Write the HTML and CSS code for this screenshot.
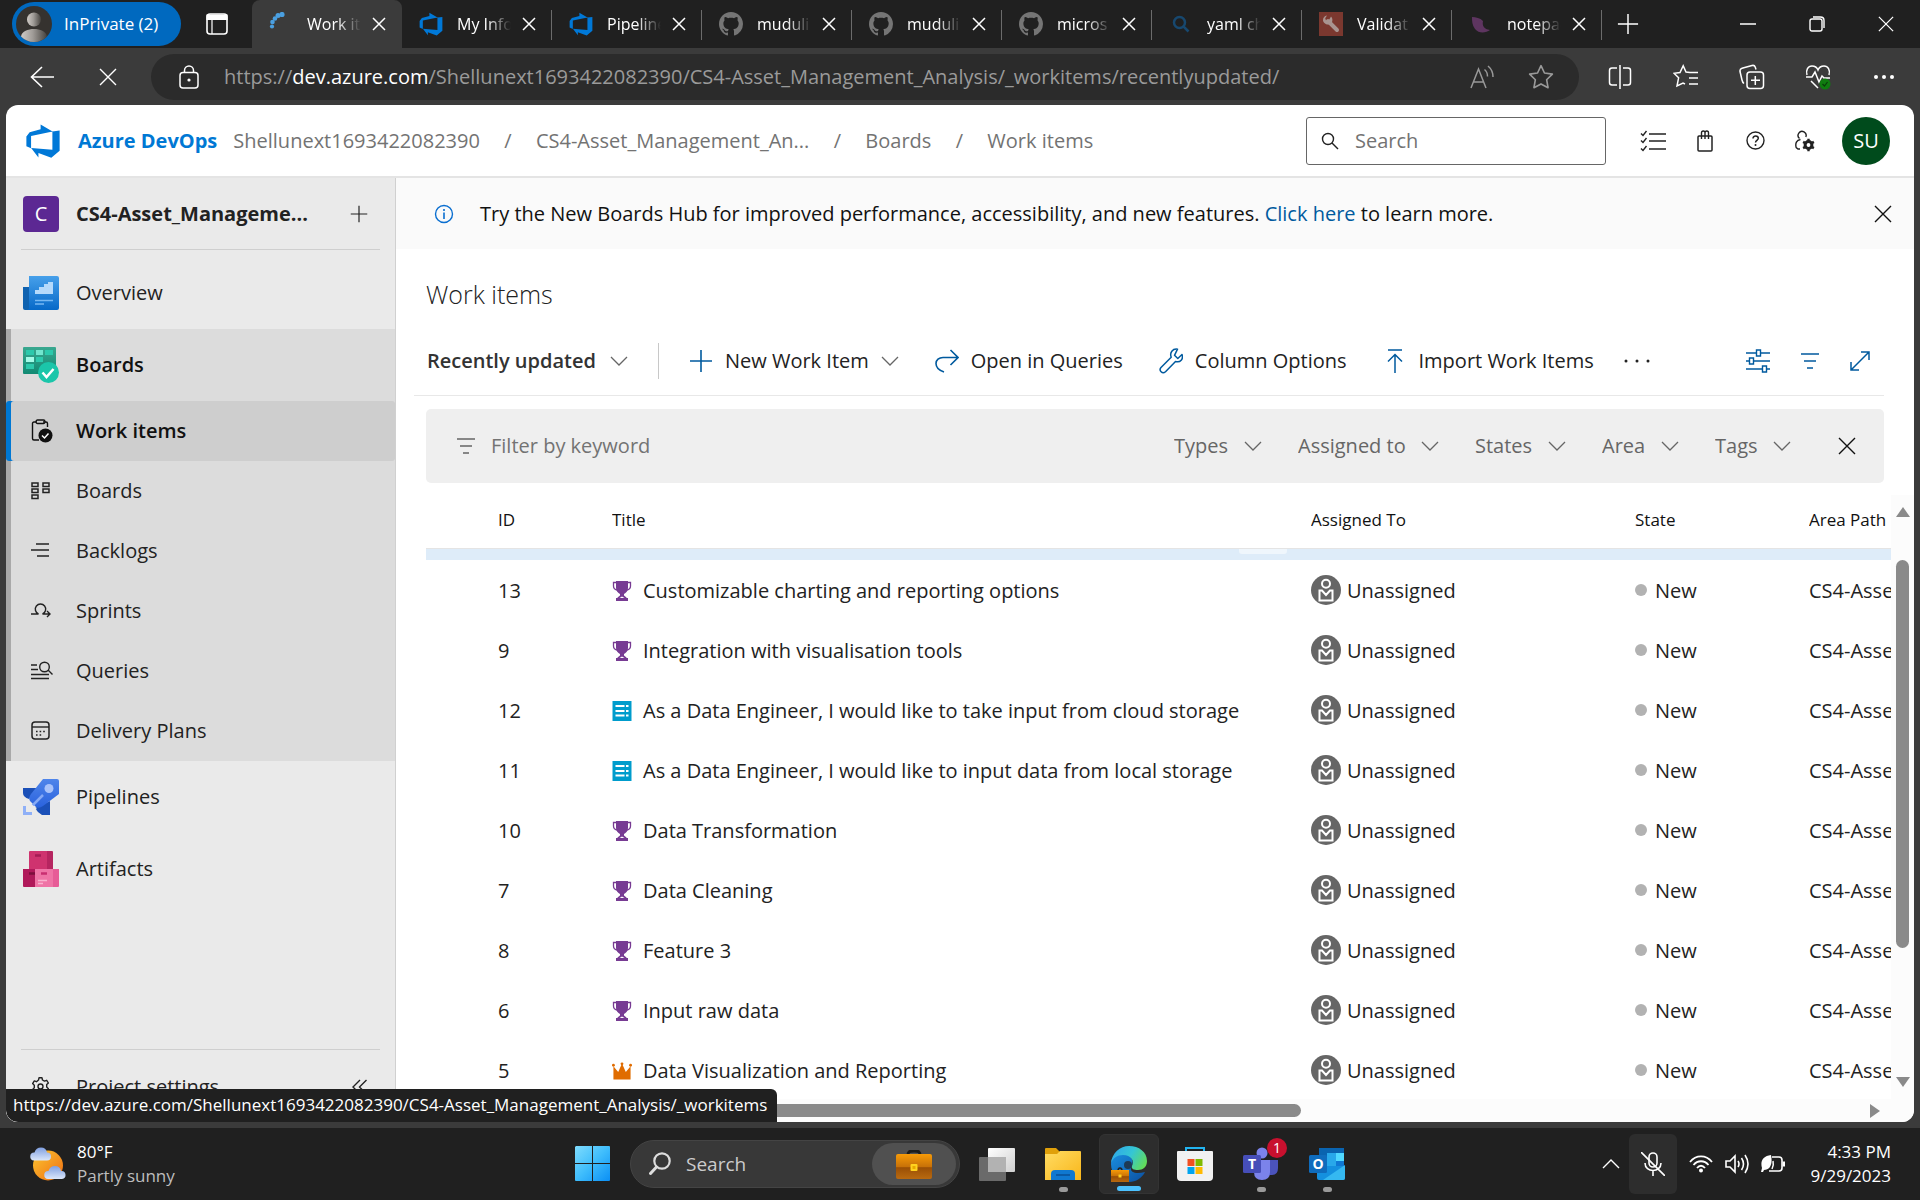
FILE: index.html
```html
<!DOCTYPE html>
<html lang="en">
<head>
<meta charset="utf-8">
<title>Work items - Boards</title>
<link rel="stylesheet" href="styles.css">
</head>
<body>
<svg class="sprite" aria-hidden="true">
  <defs>
    <linearGradient id="g-person" x1="0" x2="1"><stop offset="0" stop-color="#d0cbc6"/><stop offset=".45" stop-color="#a09c98"/><stop offset="1" stop-color="#45423e"/></linearGradient>
    <linearGradient id="g-over" x1="0" y1="0" x2="0" y2="1"><stop offset="0" stop-color="#47a0ea"/><stop offset="1" stop-color="#0669c8"/></linearGradient>
    <linearGradient id="g-board" x1="0" y1="0" x2="0" y2="1"><stop offset="0" stop-color="#3aa890"/><stop offset="1" stop-color="#118a73"/></linearGradient>
    <linearGradient id="g-rocket" x1="0" y1="0" x2="0" y2="1"><stop offset="0" stop-color="#4f85ea"/><stop offset="1" stop-color="#2a62dd"/></linearGradient>
    <linearGradient id="g-win" x1="0" y1="0" x2="1" y2="1"><stop offset="0" stop-color="#7fdcfd"/><stop offset=".5" stop-color="#3fbdfc"/><stop offset="1" stop-color="#0a8ff5"/></linearGradient>
    <linearGradient id="g-sun" x1="0" y1="0" x2="1" y2="1"><stop offset="0" stop-color="#fcc630"/><stop offset="1" stop-color="#ef6d12"/></linearGradient>
    <linearGradient id="g-cloud" x1="0" y1="0" x2="0" y2="1"><stop offset="0" stop-color="#7f9fe0"/><stop offset="1" stop-color="#dbe7fb"/></linearGradient>
    <linearGradient id="g-edge1" x1="0" y1=".3" x2="1" y2=".7"><stop offset="0" stop-color="#2fa8ea"/><stop offset=".5" stop-color="#35c6d4"/><stop offset="1" stop-color="#64dd55"/></linearGradient>
    <linearGradient id="g-edge2" x1="0" y1="0" x2="1" y2="1"><stop offset="0" stop-color="#1a8fe0"/><stop offset="1" stop-color="#0b4fa0"/></linearGradient>
    <linearGradient id="g-folder" x1="0" y1="0" x2="1" y2="1"><stop offset="0" stop-color="#ffdc63"/><stop offset="1" stop-color="#f9b61a"/></linearGradient>
    <linearGradient id="g-case" x1="0" y1="0" x2="0" y2="1"><stop offset="0" stop-color="#f79b08"/><stop offset=".5" stop-color="#c87208"/><stop offset=".55" stop-color="#9a4f05"/><stop offset="1" stop-color="#b96a10"/></linearGradient>
    <linearGradient id="g-view" x1="0" y1="0" x2="1" y2="1"><stop offset="0" stop-color="#ffffff"/><stop offset="1" stop-color="#cfcfcf"/></linearGradient>
  </defs>
  <symbol id="i-devops" viewBox="0 0 16 16"><path fill="#0078d7" d="M15 3.622v8.512L11.5 15l-5.425-1.975v1.958L3.004 10.97l8.951.7V4.005L15 3.622zm-2.984.428L6.994 1v2.001L2.382 4.356 1 6.13v4.029l1.978.873V5.869l9.038-1.818z"/></symbol>
  <symbol id="i-github" viewBox="0 0 16 16"><path fill="#757575" d="M8 0C3.58 0 0 3.58 0 8c0 3.54 2.29 6.53 5.47 7.59.4.07.55-.17.55-.38 0-.19-.01-.82-.01-1.49-2.01.37-2.53-.49-2.69-.94-.09-.23-.48-.94-.82-1.13-.28-.15-.68-.52-.01-.53.63-.01 1.08.58 1.23.82.72 1.21 1.87.87 2.33.66.07-.52.28-.87.51-1.07-1.78-.2-3.64-.89-3.64-3.95 0-.87.31-1.59.82-2.15-.08-.2-.36-1.02.08-2.12 0 0 .67-.21 2.2.82.64-.18 1.32-.27 2-.27s1.36.09 2 .27c1.53-1.04 2.2-.82 2.2-.82.44 1.1.16 1.92.08 2.12.51.56.82 1.27.82 2.15 0 3.07-1.87 3.75-3.65 3.95.29.25.54.73.54 1.48 0 1.07-.01 1.93-.01 2.2 0 .21.15.46.55.38A8.01 8.01 0 0 0 16 8c0-4.42-3.58-8-8-8z"/></symbol>
  <symbol id="i-x" viewBox="0 0 16 16"><path d="M2 2l12 12M14 2L2 14" fill="none" stroke="currentColor" stroke-width="1.5"/></symbol>
  <symbol id="i-xthin" viewBox="0 0 18 18"><path d="M1 1l16 16M17 1L1 17" fill="none" stroke="currentColor" stroke-width="1.4"/></symbol>
  <symbol id="i-plus" viewBox="0 0 24 24"><path d="M12 1v22M1 12h22" fill="none" stroke="currentColor" stroke-width="1.6"/></symbol>
  <symbol id="i-chev" viewBox="0 0 18 10"><path d="M1 1l8 8 8-8" fill="none" stroke="currentColor" stroke-width="1.3"/></symbol>
  <symbol id="i-search" viewBox="0 0 18 18"><circle cx="7" cy="7" r="5.5" fill="none" stroke="currentColor" stroke-width="1.4"/><path d="M11 11l6 6" stroke="currentColor" stroke-width="1.4"/></symbol>
  <symbol id="i-filter" viewBox="0 0 20 18"><path d="M1 2h18M4 9h12M7 16h6" stroke="currentColor" stroke-width="1.5"/></symbol>
  <symbol id="i-star" viewBox="0 0 24 24"><path d="M12 1.500l3.200 6.800 7.300 1-5.300 5.200 1.300 7.400L12 18.400l-6.500 3.500 1.300-7.400L1.500 9.300l7.300-1z" fill="none" stroke="currentColor" stroke-width="1.500" stroke-linejoin="round"/></symbol>
  <symbol id="i-trophy" viewBox="0 0 19 20"><path fill="#773b93" d="M3.500 0h12v7c0 3-2 5-4 6v1.500l2.500 2V17h1.500v3H3.500v-3H5v-.500l2.500-2V13c-2-1-4-3-4-6z"/><path d="M4 1.500H1V5c0 2.500 1.500 3.500 3.500 4M15 1.500h3V5c0 2.500-1.500 3.500-3.500 4" fill="none" stroke="#773b93" stroke-width="1.300"/><path d="M7 17l2.500-1.500L12 17z" fill="#fff"/></symbol>
  <symbol id="i-story" viewBox="0 0 19 20"><path fill="#009ccc" d="M0 0h19v20H0z"/><path d="M3 5h9M3 10h9M3 14.500h9M13.500 5H16M13.500 10H16M13.500 14.500H16" stroke="#fff" stroke-width="1.800"/></symbol>
  <symbol id="i-crown" viewBox="0 0 21 18"><path fill="#e06c00" d="M1.500 18V4l5 6 4-9 4 9 5-6v14z"/><circle cx="1.500" cy="3" r="1.500" fill="#e06c00"/><circle cx="10.500" cy="1.500" r="1.500" fill="#e06c00"/><circle cx="19.500" cy="3" r="1.500" fill="#e06c00"/></symbol>
  <symbol id="i-person" viewBox="0 0 30 30"><circle cx="15" cy="15" r="15" fill="#666"/><circle cx="15" cy="8.700" r="4" fill="none" stroke="#fff" stroke-width="2"/><path d="M8.500 25.500V15.500h2.500l4 4.500 4-4.500h2.500v10z" fill="none" stroke="#fff" stroke-width="2"/></symbol>
  <symbol id="i-case" viewBox="0 0 36 29"><path d="M12 5c0-3 1-4 6-4s6 1 6 4" fill="none" stroke="#1c1c1c" stroke-width="3"/><rect y="4" width="36" height="25" rx="2" fill="url(#g-case)"/><rect x="14.500" y="14" width="7" height="7" rx="1" fill="#ffd21f"/><rect x="16.500" y="16" width="3" height="3" fill="#e9a800"/></symbol>
</svg>

<header class="tabstrip">
  <button class="inprivate">
    <svg width="36" height="36" viewBox="0 0 36 36"><circle cx="18" cy="18" r="18" fill="#35322f"/><circle cx="18" cy="13.500" r="7" fill="url(#g-person)"/><path d="M5 30.500C6 25 12 23 18 23s12 2 13 7.500A18 18 0 0 1 18 36 18 18 0 0 1 5 30.500z" fill="url(#g-person)"/></svg>
    <span>InPrivate (2)</span>
  </button>
  <button class="tabmenu" aria-label="Tab actions"><svg width="22" height="22" viewBox="0 0 22 22"><rect x="1" y="1" width="20" height="20" rx="3" fill="none" stroke="#fff" stroke-width="1.600"/><path d="M1 2h20v4.500H1zM6 6v15" fill="#fff" stroke="#fff" stroke-width="1.200"/></svg></button>
  <nav class="tabs" aria-label="Open tabs">
    <div class="tab active"><svg class="fav" width="24" height="24" viewBox="0 0 24 24"><g fill="#4a9fe0"><circle cx="13" cy="2.500" r="2.600"/><circle cx="9" cy="3.500" r="2.500"/><circle cx="6" cy="6.500" r="2.300"/><circle cx="3.500" cy="10" r="2.300"/><circle cx="3" cy="14.500" r="2.100"/></g></svg><span class="tabname">Work items</span><button class="tabclose" aria-label="Close tab"><svg width="16" height="16"><use href="#i-x"/></svg></button></div>
    <div class="tab"><svg class="fav" width="26" height="26"><use href="#i-devops"/></svg><span class="tabname">My Information</span><button class="tabclose" aria-label="Close tab"><svg width="16" height="16"><use href="#i-x"/></svg></button></div>
    <div class="tab"><svg class="fav" width="26" height="26"><use href="#i-devops"/></svg><span class="tabname">Pipelines</span><button class="tabclose" aria-label="Close tab"><svg width="16" height="16"><use href="#i-x"/></svg></button></div>
    <div class="tab"><svg class="fav" width="24" height="24"><use href="#i-github"/></svg><span class="tabname">muduli</span><button class="tabclose" aria-label="Close tab"><svg width="16" height="16"><use href="#i-x"/></svg></button></div>
    <div class="tab"><svg class="fav" width="24" height="24"><use href="#i-github"/></svg><span class="tabname">muduli</span><button class="tabclose" aria-label="Close tab"><svg width="16" height="16"><use href="#i-x"/></svg></button></div>
    <div class="tab"><svg class="fav" width="24" height="24"><use href="#i-github"/></svg><span class="tabname">micros</span><button class="tabclose" aria-label="Close tab"><svg width="16" height="16"><use href="#i-x"/></svg></button></div>
    <div class="tab"><svg class="fav" width="24" height="24" viewBox="0 0 24 24"><circle cx="10.500" cy="10.500" r="5.500" fill="none" stroke="#17486f" stroke-width="2.500"/><path d="M14.500 14.500l5 5" stroke="#17486f" stroke-width="2.500"/></svg><span class="tabname">yaml ch</span><button class="tabclose" aria-label="Close tab"><svg width="16" height="16"><use href="#i-x"/></svg></button></div>
    <div class="tab"><svg class="fav" width="24" height="24" viewBox="0 0 24 24"><path fill="#7b382f" d="M0 0h24v24H0z"/><path d="M9 9l9 9" stroke="#a99490" stroke-width="4" stroke-linecap="round"/><path d="M4 8.500a5 5 0 0 0 8 3 5 5 0 0 0 0-7l-2 3.500-3 .500-.800-2.300L8 3.500a5 5 0 0 0-4 5z" fill="#a99490"/></svg><span class="tabname">Validat</span><button class="tabclose" aria-label="Close tab"><svg width="16" height="16"><use href="#i-x"/></svg></button></div>
    <div class="tab"><svg class="fav" width="24" height="24" viewBox="0 0 24 24"><path d="M3 5c4 0 8 1 11 4-1 5 1 8 7 9-4 3-11 4-15-1-3-4-3-8-3-12z" fill="#5e3560"/></svg><span class="tabname">notepad</span><button class="tabclose" aria-label="Close tab"><svg width="16" height="16"><use href="#i-x"/></svg></button></div>
  </nav>
  <button class="newtab" aria-label="New tab"><svg width="22" height="22"><use href="#i-plus"/></svg></button>
  <div class="winbtns">
    <button aria-label="Minimize"><svg width="16" height="16" viewBox="0 0 16 16"><path d="M0 8h16" stroke="#fff" stroke-width="1.500"/></svg></button>
    <button aria-label="Restore"><svg width="16" height="16" viewBox="0 0 16 16"><rect x="1" y="3" width="12" height="12" rx="2" fill="none" stroke="#fff" stroke-width="1.400"/><path d="M4 1h7.500Q15 1 15 4.500V12" fill="none" stroke="#fff" stroke-width="1.400"/></svg></button>
    <button aria-label="Close"><svg width="16" height="16"><use href="#i-xthin"/></svg></button>
  </div>
</header>

<div class="navbar">
  <button aria-label="Back"><svg width="24" height="22" viewBox="0 0 24 22"><path d="M12 1L1.500 11 12 21M1.500 11H24" fill="none" stroke="#fff" stroke-width="1.600"/></svg></button>
  <button aria-label="Stop loading"><svg width="18" height="18"><use href="#i-xthin"/></svg></button>
  <div class="address">
    <svg width="20" height="24" viewBox="0 0 20 24"><rect x="1" y="7.500" width="18" height="15.500" rx="3" fill="none" stroke="#fff" stroke-width="1.500"/><path d="M5.500 7.500V5.500a4.500 4.500 0 0 1 9 0v2" fill="none" stroke="#fff" stroke-width="1.500"/><circle cx="10" cy="15" r="1.600" fill="#fff"/></svg>
    <span class="url">https://<b>dev.azure.com</b>/Shellunext1693422082390/CS4-Asset_Management_Analysis/_workitems/recentlyupdated/</span>
    <button aria-label="Read aloud"><svg width="24" height="24" viewBox="0 0 24 24"><path d="M1 23L8.500 4 16 23M3.500 17h10M14.500 4.500c2 1.500 3 4 3 7M18 1c3 2.500 5 6 5 11" fill="none" stroke="#999" stroke-width="1.500"/></svg></button>
    <button class="fade" aria-label="Add to favorites"><svg width="26" height="26"><use href="#i-star"/></svg></button>
  </div>
  <div class="navicons">
    <button aria-label="Split screen"><svg width="24" height="24" viewBox="0 0 24 24"><path d="M9 3H4Q1.500 3 1.500 5.500v12Q1.500 20 4 20h5M15 3h5q2.500 0 2.500 2.500v12Q22.500 20 20 20h-5M12 0v24" fill="none" stroke="#fff" stroke-width="1.500"/></svg></button>
    <button aria-label="Favorites"><svg width="26" height="26" viewBox="0 0 26 26"><path d="M17 8.500L13 8 10.200 1.800 7 8.500l-6 .800 4.600 4.500L4 22l6-3 2 1M15 8.500h10M16 14h9M16 20h9" fill="none" stroke="#fff" stroke-width="1.500"/></svg></button>
    <button aria-label="Collections"><svg width="26" height="26" viewBox="0 0 26 26"><rect x="8" y="8" width="16.500" height="16.500" rx="3" fill="none" stroke="#fff" stroke-width="1.500"/><path d="M16.300 12v9M12 16.300h9M5 19.500Q3.500 18.500 3 16L1 7.500Q.600 5 3 4.300L13 1.500q2.500-.600 3.200 1.500L17 5.500" fill="none" stroke="#fff" stroke-width="1.500"/></svg></button>
    <button aria-label="Browser essentials"><svg width="26" height="26" viewBox="0 0 26 26"><path d="M2 11C.500 6 3 2 7 2c3 0 5 1.500 6 4 1-2.500 3-4 6-4 4 0 6.500 4 5 9M1 13h6l3-5 4 10 3-6 2 2h6M6 17l7 7" fill="none" stroke="#fff" stroke-width="1.500"/><circle cx="20" cy="20" r="5.500" fill="#107c10"/><path d="M17.500 20l2 2 3-4" fill="none" stroke="#0a3c0a" stroke-width="1.200"/></svg></button>
    <button aria-label="More"><svg width="20" height="6" viewBox="0 0 20 6"><circle cx="2" cy="3" r="2" fill="#fff"/><circle cx="10" cy="3" r="2" fill="#fff"/><circle cx="18" cy="3" r="2" fill="#fff"/></svg></button>
  </div>
</div>

<div class="viewport">
  <header class="appbar">
    <a class="brand" href="#"><svg width="38" height="38"><use href="#i-devops"/></svg><span>Azure DevOps</span></a>
    <nav class="crumbs" aria-label="Breadcrumb">
      <a href="#">Shellunext1693422082390</a><i>/</i><a href="#">CS4-Asset_Management_An...</a><i>/</i><a href="#">Boards</a><i>/</i><a href="#">Work items</a>
    </nav>
    <label class="search"><svg width="18" height="18"><use href="#i-search"/></svg><input type="text" placeholder="Search" aria-label="Search"></label>
    <div class="appicons">
      <button aria-label="Work"><svg width="26" height="22" viewBox="0 0 26 22"><path d="M9 4h17M9 11h17M9 19h17M1 3.500L3 5.500 6.500 1M1 10.500l2 2L6.500 8M1 18.500l2 2L6.500 16" fill="none" stroke="#222" stroke-width="1.400"/></svg></button>
      <button aria-label="Marketplace"><svg width="16" height="22" viewBox="0 0 16 22"><rect x="1" y="6" width="14" height="15" rx="1" fill="none" stroke="#222" stroke-width="1.500"/><path d="M4.500 9V3q0-2 1.800-2T8 3v6M8 3q0-2 1.800-2t1.700 2v6" fill="none" stroke="#222" stroke-width="1.400"/></svg></button>
      <button aria-label="Help"><svg width="19" height="19" viewBox="0 0 19 19"><circle cx="9.500" cy="9.500" r="8.500" fill="none" stroke="#222" stroke-width="1.400"/><path d="M7 7.500C7 4 12.300 4.300 12.300 7.300c0 2-2.800 2.200-2.800 4.200" fill="none" stroke="#222" stroke-width="1.500"/><circle cx="9.500" cy="14" r="1" fill="#222"/></svg></button>
      <button aria-label="User settings"><svg width="20" height="22" viewBox="0 0 20 22"><path d="M10.800 7A4 4 0 1 0 4.500 8.500M5.500 9.500C1.500 10 0 13.500 1.200 17.500L3 19h2" fill="none" stroke="#222" stroke-width="1.400"/><circle cx="13.500" cy="15" r="3.400" fill="none" stroke="#222" stroke-width="3"/><path d="M13.500 8.800v3M13.500 18.200v3M8.100 11.900l2.600 1.500M16.300 16.600l2.600 1.500M8.100 18.100l2.600-1.500M16.300 13.400l2.600-1.500" stroke="#222" stroke-width="2.400"/></svg></button>
      <button class="avatar">SU</button>
    </div>
  </header>

  <div class="columns">
    <aside class="sidebar">
      <div class="project"><span class="tile">C</span><b>CS4-Asset_Manageme...</b><button aria-label="Add"><svg width="18" height="18"><use href="#i-plus"/></svg></button></div>
      <hr>
      <a class="hub" href="#"><svg width="36" height="36" viewBox="0 0 36 36"><path fill="#0f62b0" d="M0 12h8v23H2q-2 0-2-2z"/><path fill="url(#g-over)" d="M6 1h28q2 0 2 2v30q0 2-2 2H4q2 0 2-2z"/><path fill="#b5dafb" d="M12 15h4v-3h5V9h4V7h5v12H12z"/><path d="M12 25.500h18M12 29h9" stroke="#75b8f3" stroke-width="1.500"/></svg><span>Overview</span></a>
      <div class="group">
        <a class="hub strong" href="#"><svg width="36" height="36" viewBox="0 0 36 36"><rect width="33" height="27" rx="1" fill="url(#g-board)"/><path d="M3 3h8v5H3zM22 3h8v5h-8zM13 10h7v5h-7zM3 17h8v5H3z" fill="#2cc9ac"/><path d="M13 3h7v5h-7z" fill="#72e6cf"/><path d="M3 10h8v5H3z" fill="#a4fbe8"/><circle cx="25.500" cy="25.500" r="10.500" fill="#1bc6aa"/><path d="M19.500 25.500l4 4.500 7-8" fill="none" stroke="#fff" stroke-width="2.500"/></svg><span>Boards</span></a>
        <a class="item current" href="#"><svg width="22" height="24" viewBox="0 0 22 24"><path d="M6 3H3Q1.500 3 1.500 4.500v15Q1.500 21 3 21h5M12 3h3q1.500 0 1.500 1.500V8" fill="none" stroke="#111" stroke-width="1.400"/><rect x="5" y="1" width="9" height="3.500" rx="1.500" fill="none" stroke="#111" stroke-width="1.300"/><circle cx="14.500" cy="16.500" r="7" fill="#111"/><path d="M11 16.500l2.500 2.500 4-4.500" fill="none" stroke="#fff" stroke-width="1.500"/></svg><span>Work items</span></a>
        <a class="item" href="#"><svg width="22" height="18" viewBox="0 0 22 18"><path d="M1 1h6v3.500H1zM1 7h6v3.500H1zM1 13h6v3.500H1zM12 1h6v3.500h-6zM12 7h6v3.500h-6z" fill="none" stroke="#222" stroke-width="1.500"/></svg><span>Boards</span></a>
        <a class="item" href="#"><svg width="22" height="18" viewBox="0 0 22 18"><path d="M5 2h13M0 8h18M6 14h12" stroke="#222" stroke-width="1.400"/></svg><span>Backlogs</span></a>
        <a class="item" href="#"><svg width="22" height="16" viewBox="0 0 22 16"><path d="M0 11h7.500A5.200 5.200 0 1 1 11.500 11H19M16 8l3 3-3 3" fill="none" stroke="#222" stroke-width="1.400"/></svg><span>Sprints</span></a>
        <a class="item" href="#"><svg width="22" height="20" viewBox="0 0 22 20"><path d="M0 4h6M0 8.500h7M0 13.500h18M0 17.500h18M17 9l4.500 4.500" stroke="#222" stroke-width="1.400"/><circle cx="13.500" cy="6" r="4.800" fill="none" stroke="#222" stroke-width="1.400"/></svg><span>Queries</span></a>
        <a class="item" href="#"><svg width="22" height="20" viewBox="0 0 22 20"><rect x="1" y="1" width="17" height="17" rx="3" fill="none" stroke="#222" stroke-width="1.500"/><path d="M1 6h17" stroke="#222" stroke-width="1.400"/><path d="M5 10.500h10M5 14h7" stroke="#222" stroke-width="1.600" stroke-dasharray="1.600 2"/></svg><span>Delivery Plans</span></a>
      </div>
      <a class="hub" href="#"><svg width="36" height="36" viewBox="0 0 36 36"><path fill="#1b50b8" d="M0 9h14L6 20q-6-2-6-6zM27 22v14h-8q-5-3-7-7z"/><path fill="url(#g-rocket)" d="M20 0h14q2 0 2 2v13L20 27q-4 3-7 1l-6-6q-2-3 1-7z"/><circle cx="26" cy="9.500" r="4.500" fill="#a9c3fa"/><path d="M9 27L20 16" stroke="#85a9f5" stroke-width="2.500"/><path d="M5 22l9 8-4 1-6-6z" fill="#eaeaea"/><path d="M0 27h3v6h6v3H0z" fill="#8fb0f7"/></svg><span>Pipelines</span></a>
      <a class="hub" href="#"><svg width="36" height="36" viewBox="0 0 36 36"><path fill="#cf336f" d="M6 1q0-1 1-1h17v18H6z"/><path fill="#b62560" d="M24 0h5q1 0 1 1v17h-6z"/><path fill="#b0195a" d="M0 18h12v18H1q-1 0-1-1z"/><path fill="#ef74a6" d="M12 18h18v18H12z"/><path fill="#e75c97" d="M30 18h6v17q0 1-1 1h-5z"/><path d="M12 4.500h6" stroke="#a51c55" stroke-width="2.500"/><path d="M6 22.500h6" stroke="#7c0e3d" stroke-width="2.500"/><path d="M18 22.500h6" stroke="#c92f70" stroke-width="2.500"/><path d="M15 29.500h9M15 32.500h5" stroke="#f9b3cf" stroke-width="1.300"/></svg><span>Artifacts</span></a>
      <div class="settings">
        <hr>
        <div class="settingsrow">
          <a class="item" href="#"><svg width="22" height="20" viewBox="0 0 22 20"><path d="M7.500 3l.500-2.200h3L11.500 3l2 1.100 2.200-.800 1.700 2.700-1.700 1.600v2.500l1.700 1.600-1.700 2.700-2.200-.800-2 1.100L11 18H8l-.500-2.600-2-1.100-2.200.800-1.700-2.700 1.700-1.600V8.200L1.600 6.600l1.700-2.700 2.200.800z" fill="none" stroke="#222" stroke-width="1.400" stroke-linejoin="round"/><circle cx="9.500" cy="9.500" r="2.500" fill="none" stroke="#222" stroke-width="1.400"/></svg><span>Project settings</span></a>
          <button aria-label="Collapse"><svg width="15" height="16" viewBox="0 0 15 16"><path d="M8 1L1 8l7 7M14.500 1l-7 7 7 7" fill="none" stroke="#222" stroke-width="1.400"/></svg></button>
        </div>
      </div>
    </aside>

    <main class="content">
      <div class="banner">
        <svg width="20" height="20" viewBox="0 0 20 20"><circle cx="10" cy="10" r="8.500" fill="none" stroke="#0b6fd0" stroke-width="1.400"/><path d="M10 8.500V15M10 5v2" stroke="#0b6fd0" stroke-width="1.600"/></svg>
        <p>Try the New Boards Hub for improved performance, accessibility, and new features. <a href="#">Click here</a> to learn more.</p>
        <button aria-label="Dismiss"><svg width="18" height="18"><use href="#i-xthin"/></svg></button>
      </div>
      <h1>Work items</h1>
      <div class="toolbar">
        <button class="pivot">Recently updated<svg class="drop" width="18" height="10"><use href="#i-chev"/></svg></button>
        <span class="vline"></span>
        <button class="cmd"><svg class="blue" width="24" height="24"><use href="#i-plus"/></svg>New Work Item<svg class="drop" width="18" height="10"><use href="#i-chev"/></svg></button>
        <button class="cmd"><svg class="blue" width="24" height="24" viewBox="0 0 24 24"><path d="M9 23C3 21 1 18 1 14.500 1 11 4 8.500 8 8.500h15M15.500 1L23 8.500 15.500 16" fill="none" stroke="currentColor" stroke-width="1.600"/></svg>Open in Queries</button>
        <button class="cmd"><svg class="blue" width="24" height="26" viewBox="0 0 24 26"><path d="M18.500 1.200c-5-.700-8 3.500-6.300 8L2 19.500c-2.500 3 1.300 7 4.500 4.300L16.500 13.500c5 1.500 8-2.500 6.500-7l-4.200 4-3.300-3.200z" fill="none" stroke="currentColor" stroke-width="1.500" stroke-linejoin="round"/></svg>Column Options</button>
        <button class="cmd"><svg class="blue" width="24" height="24" viewBox="0 0 24 24"><path d="M5 1h14M12 24V6M5 12.500l7-7 7 7" fill="none" stroke="currentColor" stroke-width="1.500"/></svg>Import Work Items</button>
        <button class="dots" aria-label="More actions"><svg width="26" height="4" viewBox="0 0 26 4"><circle cx="2" cy="2" r="1.500" fill="#222"/><circle cx="13" cy="2" r="1.500" fill="#222"/><circle cx="24" cy="2" r="1.500" fill="#222"/></svg></button>
        <div class="views">
          <button aria-label="View options"><svg width="24" height="24" viewBox="0 0 24 24"><path d="M0 4h10M15 4h9M0 12h3M8 12h16M0 20h16M21 20h3" stroke="currentColor" stroke-width="1.600"/><path d="M10.500 1h4v6h-4zM3.500 9h4v6h-4zM16.500 17h4v6h-4z" fill="none" stroke="currentColor" stroke-width="1.400"/></svg></button>
          <button aria-label="Filter"><svg width="20" height="18"><use href="#i-filter"/></svg></button>
          <button aria-label="Full screen"><svg width="20" height="20" viewBox="0 0 20 20"><path d="M1 19L19 1M11 1h8v8M1 11v8h8" fill="none" stroke="currentColor" stroke-width="1.500"/></svg></button>
        </div>
      </div>
      <div class="filterbar">
        <svg width="20" height="18"><use href="#i-filter"/></svg>
        <input type="text" placeholder="Filter by keyword" aria-label="Filter by keyword">
        <label><select aria-label="Types"><option>Types</option></select><svg width="18" height="10"><use href="#i-chev"/></svg></label>
        <label><select aria-label="Assigned to"><option>Assigned to</option></select><svg width="18" height="10"><use href="#i-chev"/></svg></label>
        <label><select aria-label="States"><option>States</option></select><svg width="18" height="10"><use href="#i-chev"/></svg></label>
        <label><select aria-label="Area"><option>Area</option></select><svg width="18" height="10"><use href="#i-chev"/></svg></label>
        <label><select aria-label="Tags"><option>Tags</option></select><svg width="18" height="10"><use href="#i-chev"/></svg></label>
        <button aria-label="Clear filters"><svg width="18" height="18"><use href="#i-xthin"/></svg></button>
      </div>
      <div class="grid">
        <div class="tablewrap">
          <table>
            <colgroup><col class="c-id"><col><col class="c-who"><col class="c-state"><col class="c-area"></colgroup>
            <thead><tr><th>ID</th><th>Title</th><th>Assigned To</th><th>State</th><th>Area Path</th></tr></thead>
            <tbody>
              <tr class="selected"><td colspan="5"><span></span></td></tr>
              <tr><td>13</td><td><svg width="20" height="20"><use href="#i-trophy"/></svg>Customizable charting and reporting options</td><td><svg width="30" height="30"><use href="#i-person"/></svg>Unassigned</td><td><i class="dot"></i>New</td><td>CS4-Asset_Management</td></tr>
              <tr><td>9</td><td><svg width="20" height="20"><use href="#i-trophy"/></svg>Integration with visualisation tools</td><td><svg width="30" height="30"><use href="#i-person"/></svg>Unassigned</td><td><i class="dot"></i>New</td><td>CS4-Asset_Management</td></tr>
              <tr><td>12</td><td><svg width="20" height="20"><use href="#i-story"/></svg>As a Data Engineer, I would like to take input from cloud storage</td><td><svg width="30" height="30"><use href="#i-person"/></svg>Unassigned</td><td><i class="dot"></i>New</td><td>CS4-Asset_Management</td></tr>
              <tr><td>11</td><td><svg width="20" height="20"><use href="#i-story"/></svg>As a Data Engineer, I would like to input data from local storage</td><td><svg width="30" height="30"><use href="#i-person"/></svg>Unassigned</td><td><i class="dot"></i>New</td><td>CS4-Asset_Management</td></tr>
              <tr><td>10</td><td><svg width="20" height="20"><use href="#i-trophy"/></svg>Data Transformation</td><td><svg width="30" height="30"><use href="#i-person"/></svg>Unassigned</td><td><i class="dot"></i>New</td><td>CS4-Asset_Management</td></tr>
              <tr><td>7</td><td><svg width="20" height="20"><use href="#i-trophy"/></svg>Data Cleaning</td><td><svg width="30" height="30"><use href="#i-person"/></svg>Unassigned</td><td><i class="dot"></i>New</td><td>CS4-Asset_Management</td></tr>
              <tr><td>8</td><td><svg width="20" height="20"><use href="#i-trophy"/></svg>Feature 3</td><td><svg width="30" height="30"><use href="#i-person"/></svg>Unassigned</td><td><i class="dot"></i>New</td><td>CS4-Asset_Management</td></tr>
              <tr><td>6</td><td><svg width="20" height="20"><use href="#i-trophy"/></svg>Input raw data</td><td><svg width="30" height="30"><use href="#i-person"/></svg>Unassigned</td><td><i class="dot"></i>New</td><td>CS4-Asset_Management</td></tr>
              <tr><td>5</td><td><svg width="20" height="20"><use href="#i-crown"/></svg>Data Visualization and Reporting</td><td><svg width="30" height="30"><use href="#i-person"/></svg>Unassigned</td><td><i class="dot"></i>New</td><td>CS4-Asset_Management</td></tr>
            </tbody>
          </table>
        </div>
        <div class="vbar"><svg width="14" height="10" viewBox="0 0 14 10"><path d="M7 0l7 10H0z" fill="#8a8a8a"/></svg><div class="vtrack"><span></span></div><svg width="14" height="10" viewBox="0 0 14 10"><path d="M7 10L0 0h14z" fill="#8a8a8a"/></svg></div>
        <div class="hbar"><span></span><svg width="10" height="14" viewBox="0 0 10 14"><path d="M0 0l10 7-10 7z" fill="#8a8a8a"/></svg></div>
      </div>
    </main>
  </div>
  <div class="status">https://dev.azure.com/Shellunext1693422082390/CS4-Asset_Management_Analysis/_workitems</div>
</div>

<footer class="taskbar">
  <button class="weather">
    <svg width="36" height="34" viewBox="0 0 36 34"><circle cx="18" cy="18.500" r="15" fill="url(#g-sun)"/><path d="M4 13.500a4 4 0 0 1 .500-8Q6 .500 11 .500t6 5a4 4 0 0 1 0 8z" fill="url(#g-cloud)"/><path d="M18 32a4 4 0 0 1 .500-8Q20 19 25 19t6 5a4 4 0 0 1 1 8z" fill="url(#g-cloud)"/></svg>
    <span><b>80°F</b><br>Partly sunny</span>
  </button>
  <div class="apps">
    <button class="app" aria-label="Start"><svg width="36" height="36" viewBox="0 0 36 36"><path fill="url(#g-win)" d="M1 0h16v17H0V1zM18 0h16q1 0 1 1v16H18zM0 18h17v17H1q-1 0-1-1zM18 18h17v16q0 1-1 1H18z"/></svg></button>
    <label class="tasksearch"><svg width="22" height="24" viewBox="0 0 22 24"><circle cx="13" cy="9" r="7.700" fill="none" stroke="#ddd" stroke-width="2.200"/><path d="M7.500 15L1.500 21.500" stroke="#ddd" stroke-width="3" stroke-linecap="round"/></svg><input type="text" placeholder="Search" aria-label="Search Windows"><span><svg width="36" height="29"><use href="#i-case"/></svg></span></label>
    <button class="app" aria-label="Task view"><svg width="36" height="34" viewBox="0 0 36 34"><rect y="10" width="27" height="24" rx="1" fill="#6a6a6a"/><rect x="9" y="1" width="27" height="24" rx="1" fill="url(#g-view)"/><path d="M9 10h18v15H9z" fill="#b2b2b2"/></svg></button>
    <button class="app" aria-label="File Explorer"><svg width="36" height="34" viewBox="0 0 36 34"><path fill="#e0a00a" d="M0 2q0-1 1-1h10l4 4v6H0z"/><path fill="url(#g-folder)" d="M0 7h12l3-3h20q1 0 1 1v28H0z"/><path d="M6 33V27q0-4 4-4h16q4 0 4 4v6z" fill="#0f78d0"/><path d="M11 28h14" stroke="#0a4f96" stroke-width="1.500"/></svg><i class="run"></i></button>
    <button class="app open" aria-label="Microsoft Edge"><svg width="36" height="36" viewBox="0 0 36 36"><path fill="url(#g-edge2)" d="M0 18C0 9 8 6 14 8c8 2 9 8 6 14-1 5 6 6 14 4-3 6-9 10-16 10C8 36 0 28 0 18z"/><path fill="url(#g-edge1)" d="M0 17C1 7 9 0 18 0c10 0 18 6 18 15 0 6-4 9-9 9-4 0-7-1-6-4 3-5-1-11-9-11C6 9 2 12 0 17z"/><circle cx="17" cy="19" r="4" fill="#1d3a55"/><path d="M7 25q0-3 2-3t2 3" fill="none" stroke="#222" stroke-width="1.500"/><path fill="url(#g-case)" d="M0 24h18v12H0z"/><path fill="#ffd21f" d="M7.500 28.500h3v3h-3z"/></svg><i class="run"></i></button>
    <button class="app" aria-label="Microsoft Store"><svg width="36" height="36" viewBox="0 0 36 36"><path d="M9 7V2h18v5" fill="none" stroke="#22b4f0" stroke-width="2"/><path d="M0 6q0-1 1-1h34q1 0 1 1v25q0 4-4 4H4q-4 0-4-4z" fill="#f1f1f1"/><path fill="#f25022" d="M10.500 13h7v7h-7z"/><path fill="#7fba00" d="M18.500 13h7v7h-7z"/><path fill="#00a4ef" d="M10.500 21h7v7h-7z"/><path fill="#ffb900" d="M18.500 21h7v7h-7z"/></svg></button>
    <button class="app teams" aria-label="Microsoft Teams"><svg width="36" height="34" viewBox="0 0 36 34"><path d="M23 13h12v8q0 7-6 7h-6z" fill="#4b53bc"/><circle cx="19" cy="6" r="5.500" fill="#7b83eb"/><path d="M11 13h16v12q0 8-8 8t-8-8z" fill="#7b83eb"/><rect y="8" width="18" height="18" rx="1.500" fill="#464eb8"/></svg><b class="glyph">T</b><em>1</em><i class="run"></i></button>
    <button class="app outlook" aria-label="Outlook"><svg width="36" height="34" viewBox="0 0 36 34"><path fill="#0a64b0" d="M10 1h25v18H10z"/><path fill="#28a8ea" d="M18 6h9v8h-9zM18 14h9v8h-9z"/><path fill="#50d9ff" d="M27 6h8v8h-8z"/><path fill="#0f78d4" d="M27 14h8v8h-8z"/><path fill="#1490df" d="M8 19l28 0v12q0 2-2 2H10q-2 0-2-2z"/><path fill="#35b8f1" d="M36 18v13q0 2-2 2H14z"/><rect y="8" width="18" height="18" rx="1.500" fill="#0f6cbd"/></svg><b class="glyph">O</b><i class="run"></i></button>
  </div>
  <div class="tray">
    <button class="up" aria-label="Hidden icons"><svg width="18" height="10" viewBox="0 0 18 10"><path d="M1 9l8-8 8 8" fill="none" stroke="#fff" stroke-width="1.400"/></svg></button>
    <button class="mic" aria-label="Microphone muted"><svg width="24" height="24" viewBox="0 0 24 24"><rect x="8" y="1" width="8" height="14" rx="4" fill="none" stroke="#fff" stroke-width="1.600"/><path d="M4 11c0 10 16 10 16 0M12 19v5M0 0l24 24" fill="none" stroke="#fff" stroke-width="1.600"/></svg></button>
    <button class="sys" aria-label="Network, sound and battery">
      <svg width="24" height="18" viewBox="0 0 24 18"><path d="M1 7c6-7.500 16-7.500 22 0M4.500 10c4-5 11-5 15 0M8 13c2.500-3 5.500-3 8 0" fill="none" stroke="#fff" stroke-width="1.800"/><circle cx="12" cy="15.500" r="2" fill="#fff"/></svg>
      <svg width="24" height="20" viewBox="0 0 24 20"><path d="M1 7h4l5-5v16l-5-5H1zM13 7q2 3 0 6M16.500 4q4 6 0 12M20 1q6 9 0 18" fill="none" stroke="#fff" stroke-width="1.600"/></svg>
      <svg width="24" height="18" viewBox="0 0 24 18"><path d="M11 2h7q3 0 3 3v8q0 3-3 3H8" fill="none" stroke="#fff" stroke-width="1.600"/><path d="M21.500 6.500H24v5h-2.500z" fill="#fff"/><path d="M10 0C2 1-1 6 1 13l-1 4h2l1-2c6 0 9-6 7-15z" fill="#fff"/><path d="M11 14q2-4 1-8" stroke="#fff" stroke-width="1.500" fill="none"/></svg>
    </button>
    <time>4:33 PM<br>9/29/2023</time>
  </div>
</footer>
</body>
</html>
```
FILE: styles.css
```css
* { box-sizing: border-box; }

body {
  margin: 0;
  height: 100vh;
  display: flex;
  flex-direction: column;
  overflow: hidden;
  background: #3b3b3b;
  color: #222;
  font: 20px/28px "Open Sans", "Noto Sans", sans-serif;
}

button, input, select {
  font: inherit;
  color: inherit;
  background: none;
  border: 0;
  padding: 0;
  margin: 0;
  outline: 0;
}
button { display: flex; align-items: center; justify-content: center; white-space: nowrap; }
svg { display: block; flex: none; }
a { color: inherit; text-decoration: none; }
i, em { font-style: normal; }
.sprite { position: absolute; width: 0; height: 0; }

/* Browser tab strip */
.tabstrip {
  flex: none;
  display: flex;
  align-items: center;
  height: 48px;
  padding-left: 12px;
  background: #202020;
  color: #fff;
  font-size: 16px;
}
.inprivate {
  width: 169px;
  height: 44px;
  padding: 0 4px;
  justify-content: flex-start;
  gap: 12px;
  border-radius: 22px;
  background: #0069bf;
  font-size: 17px;
}
.tabmenu { width: 71px; }
.tabs { display: flex; align-self: stretch; }
.tab {
  display: flex;
  align-items: center;
  width: 150px;
  padding-left: 16px;
  position: relative;
}
.tab::after {
  content: "";
  position: absolute;
  right: 0;
  top: 10px;
  bottom: 8px;
  width: 1px;
  background: #6b6b6b;
}
.tab.active { background: #3b3b3b; border-radius: 8px 8px 0 0; }
.tab.active::after { display: none; }
.fav { width: 26px; }
.tabname {
  width: 54px;
  margin-left: 13px;
  overflow: hidden;
  white-space: nowrap;
  mask-image: linear-gradient(90deg, #000 55%, transparent);
}
.tabclose { width: 36px; }
.newtab { width: 52px; }
.winbtns { display: flex; margin-left: auto; }
.winbtns button { width: 69px; }

/* Browser address row */
.navbar {
  flex: none;
  display: flex;
  align-items: center;
  height: 57px;
  padding-left: 9px;
  color: #fff;
}
.navbar > button { width: 66px; }
.address {
  flex: 1;
  display: flex;
  align-items: center;
  height: 46px;
  margin-left: 10px;
  padding-left: 28px;
  border-radius: 23px;
  background: #2b2b2b;
  color: #9a9a9a;
}
.url { flex: 1; min-width: 0; margin-left: 25px; overflow: hidden; white-space: nowrap; }
.url b { font-weight: 400; color: #fff; }
.address button { width: 59px; }
.address .fade { margin-right: 9px; }
.navicons { display: flex; padding: 0 3px 0 8px; }
.navicons button { width: 66px; }

/* Web page */
.viewport {
  flex: 1;
  min-height: 0;
  display: flex;
  flex-direction: column;
  margin: 0 6px 6px;
  border-radius: 12px;
  overflow: hidden;
  background: #fff;
  position: relative;
}
.appbar {
  flex: none;
  display: flex;
  align-items: center;
  height: 73px;
  padding: 0 24px 0 18px;
  border-bottom: 2px solid #e4e4e4;
}
.brand { display: flex; align-items: center; gap: 16px; color: #0078d4; font-weight: 700; }
.crumbs { display: flex; margin-left: 16px; color: #737373; white-space: nowrap; }
.crumbs i { width: 56px; text-align: center; }
.search {
  display: flex;
  align-items: center;
  gap: 16px;
  width: 300px;
  height: 48px;
  margin-left: auto;
  padding: 0 14px;
  border: 1px solid #666;
  border-radius: 3px;
}
.search input, .filterbar input, .tasksearch input { flex: 1; min-width: 0; }
::placeholder { color: #737373; opacity: 1; }
.appicons { display: flex; align-items: center; padding-left: 20px; }
.appicons button { width: 50px; }
.appicons button:first-child { width: 54px; }
.appicons .avatar {
  width: 48px;
  height: 48px;
  margin-left: 12px;
  border-radius: 50%;
  background: #004b1c;
  color: #fff;
}
.columns { flex: 1; min-height: 0; display: flex; }

/* Left navigation */
.sidebar {
  flex: none;
  display: flex;
  flex-direction: column;
  width: 390px;
  background: #eaeaea;
  border-right: 1px solid #d0d0d0;
}
.sidebar hr {
  flex: none;
  width: calc(100% - 30px);
  height: 1px;
  margin: 0 0 0 15px;
  border: 0;
  background: #cfcfcf;
}
.project { flex: none; display: flex; align-items: center; height: 71px; padding: 0 27px 0 17px; }
.tile {
  width: 36px;
  height: 36px;
  margin-right: 17px;
  border-radius: 4px;
  background: #5c2893;
  color: #fff;
  line-height: 36px;
  text-align: center;
}
.project button { margin-left: auto; }
.hub { flex: none; display: flex; align-items: center; gap: 17px; height: 72px; padding-left: 17px; }
.sidebar > hr { margin-bottom: 7px; }
.group { flex: none; background: #dcdcdc; box-shadow: inset 5px 0 #a9a9a9; }
.strong, .current { font-weight: 600; color: #111; }
.item { display: flex; align-items: center; gap: 23px; height: 60px; padding-left: 25px; }
.current { background: #cecece; border-radius: 3px; box-shadow: inset 5px 0 #0078d4; }
.settings { margin-top: auto; padding-bottom: 5px; }
.settingsrow { display: flex; justify-content: space-between; padding: 7px 28px 0 0; }

/* Content column */
.content { flex: 1; min-width: 0; display: flex; flex-direction: column; }
.banner {
  flex: none;
  display: flex;
  align-items: center;
  height: 71px;
  padding: 0 22px 0 38px;
  background: #fafafa;
  color: #111;
}
.banner p { margin: 0 0 0 26px; white-space: nowrap; }
.banner p a { color: #005a9e; }
.banner button { margin-left: auto; }
h1 { flex: none; margin: 0; padding: 27px 30px 29px; font-size: 25px; line-height: 36px; font-weight: 300; }
.toolbar {
  flex: none;
  display: flex;
  align-items: center;
  height: 55px;
  margin: 0 30px 13px 18px;
  padding: 0 14px 14px 13px;
  border-bottom: 1px solid #e8e8e8;
  color: #222;
}
.pivot { gap: 14px; font-weight: 600; color: #333; }
.vline { width: 1px; height: 36px; margin: 0 30px; background: #c8c8c8; }
.cmd { gap: 12px; margin-right: 36px; }
.dots { margin-left: -6px; }
.blue, .views { color: #005a9e; }
.drop { color: #666; }
.views { display: flex; align-items: center; gap: 30px; margin-left: auto; }
.filterbar {
  flex: none;
  display: flex;
  align-items: center;
  height: 74px;
  margin: 0 30px 12px;
  padding: 0 28px 0 30px;
  border-radius: 5px;
  background: #efefef;
  color: #666;
}
.filterbar input { margin-left: 15px; }
.filterbar label { display: flex; align-items: center; gap: 15px; margin-left: 36px; }
.filterbar select { appearance: none; }
.filterbar button { margin-left: 47px; color: #111; }

/* Work item table with its scroll bars */
.grid { flex: 1; min-height: 0; display: grid; grid-template: 1fr 23px / 1fr 23px; }
.tablewrap { min-width: 0; padding-left: 30px; overflow: hidden; }
table { width: 100%; table-layout: fixed; border-collapse: collapse; }
.c-id { width: 186px; }
.c-who { width: 324px; }
.c-state { width: 174px; }
.c-area { width: 82px; }
th, td { padding: 0; text-align: left; white-space: nowrap; overflow: hidden; vertical-align: middle; }
th { height: 53px; padding-bottom: 3px; border-bottom: 1px solid #e4e4e4; font-size: 17px; font-weight: 400; color: #111; }
td { height: 60px; padding-top: 1px; line-height: 30px; }
th:first-child, td:first-child { padding-left: 72px; }
td svg, .dot { display: inline-block; }
td:nth-child(2) svg { margin-right: 11px; vertical-align: -3px; }
td:nth-child(3) svg { margin-right: 6px; vertical-align: -7px; }
.dot { width: 12px; height: 12px; margin-right: 8px; border-radius: 50%; background: #b2b2b2; vertical-align: 2px; }
.selected td { height: 12px; padding-top: 0; line-height: 0; vertical-align: top; background: #deecf9; }
.selected td:first-child { padding-left: 813px; }
.selected span { display: block; width: 48px; height: 5px; border-radius: 0 0 3px 3px; background: #eff6fc; }
.vbar {
  display: flex;
  flex-direction: column;
  align-items: center;
  padding: 12px 0;
  background: #fcfcfc;
}
.vtrack { flex: 1; padding-top: 43px; }
.vtrack span { display: block; width: 13px; height: 388px; border-radius: 7px; background: #8a8a8a; }
.hbar { display: flex; align-items: center; justify-content: space-between; grid-column: 1 / 3; padding-right: 34px; background: #fcfcfc; }
.hbar span { width: 61%; height: 13px; border-radius: 7px; background: #8a8a8a; }
.status {
  position: absolute;
  left: 0;
  bottom: 0;
  padding: 2px 10px 3px 7px;
  border-radius: 0 6px 0 12px;
  background: #202020;
  color: #fff;
  font-size: 17px;
}

/* Windows task bar */
.taskbar {
  flex: none;
  display: grid;
  grid-template-columns: 1fr auto 1fr;
  align-items: center;
  height: 72px;
  background: #202020;
  color: #fff;
  font-size: 17px;
  line-height: 24px;
}
.weather { justify-self: start; gap: 11px; padding-left: 30px; color: #bdbdbd; text-align: left; }
.weather b { font-weight: 400; color: #fff; }
.apps { display: flex; align-items: center; }
.app { width: 66px; height: 60px; position: relative; }
.run {
  position: absolute;
  left: 29px;
  bottom: 2px;
  width: 9px;
  height: 5px;
  border-radius: 3px;
  background: #9a9a9a;
}
.open { width: 60px; margin: 0 3px; border: 1px solid #333; border-radius: 6px; background: #2d2d2d; }
.open .run { left: 17px; width: 24px; background: #4cc2ff; }
.tasksearch {
  display: flex;
  align-items: center;
  width: 330px;
  height: 48px;
  margin: 0 4px;
  padding: 0 3px 0 18px;
  border: 1px solid #444;
  border-radius: 24px;
  background: #383838;
  font-size: 19px;
}
.tasksearch input { margin-left: 15px; }
.tasksearch ::placeholder { color: #ccc; }
.tasksearch span {
  display: flex;
  align-items: center;
  justify-content: center;
  width: 84px;
  height: 42px;
  border-radius: 21px;
  background: #505050;
}
.glyph { position: absolute; left: 15px; top: 21px; width: 18px; line-height: 18px; font-size: 14px; }
.teams em {
  position: absolute;
  left: 39px;
  top: 4px;
  width: 20px;
  height: 20px;
  border-radius: 50%;
  background: #c8102e;
  line-height: 20px;
  font-size: 14px;
}
.tray { display: flex; align-items: center; justify-self: end; padding-right: 29px; }
.up { width: 36px; }
.mic { width: 48px; height: 60px; border-radius: 6px; background: #2d2d2d; }
.sys { gap: 12px; padding: 0 12px; }
time { min-width: 94px; text-align: right; }
```
